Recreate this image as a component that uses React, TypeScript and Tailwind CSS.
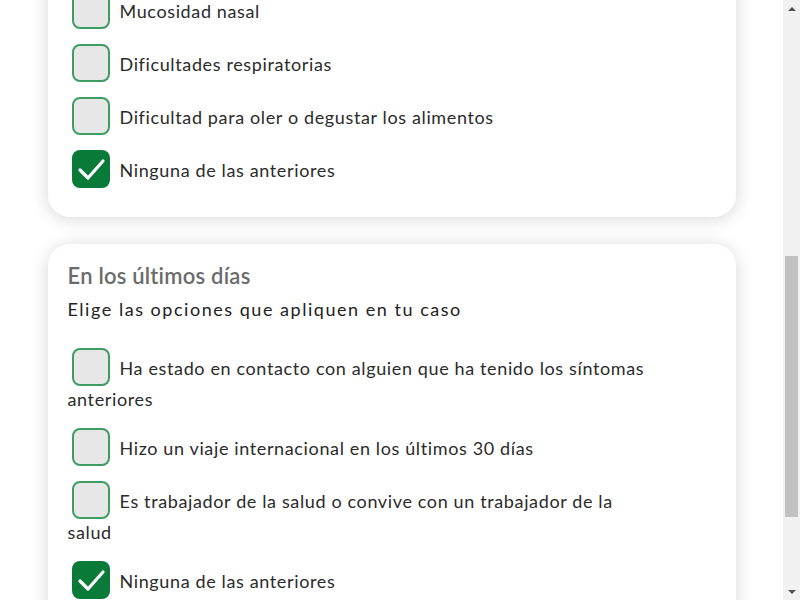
import { useLayoutEffect, useRef } from "react";

type Option = { label: string; checked?: boolean };

const sintomas: Option[] = [
  { label: "Fiebre" },
  { label: "Tos seca" },
  { label: "Dolor de garganta" },
  { label: "Cansancio" },
  { label: "Dolor de cabeza" },
  { label: "Dolor muscular" },
  { label: "Escalofríos" },
  { label: "Diarrea" },
  { label: "Mucosidad nasal" },
  { label: "Dificultades respiratorias" },
  { label: "Dificultad para oler o degustar los alimentos" },
  { label: "Ninguna de las anteriores", checked: true },
];

const ultimosDias: Option[] = [
  {
    label: "Ha estado en contacto con alguien que ha tenido los síntomas anteriores",
  },
  { label: "Hizo un viaje internacional en los últimos 30 días" },
  { label: "Es trabajador de la salud o convive con un trabajador de la salud" },
  { label: "Ninguna de las anteriores", checked: true },
];

function Checkbox({ checked }: { checked?: boolean }) {
  return (
    <span
      className={
        checked
          ? "ml-1 mr-[10px] inline-flex h-[38px] w-[38px] items-center justify-center rounded-[8px] bg-[#0a7a38] align-[-11px]"
          : "ml-1 mr-[10px] inline-block h-[38px] w-[38px] rounded-[8px] border-2 border-[#3f9d64] bg-[#e7e7e7] align-[-11px]"
      }
    >
      {checked && (
        <svg viewBox="0 0 38 38" className="h-[38px] w-[38px]">
          <path
            d="M8 20l8 8L31 11"
            stroke="white"
            strokeWidth="3.2"
            fill="none"
            strokeLinecap="round"
            strokeLinejoin="round"
          />
        </svg>
      )}
    </span>
  );
}

function OptionRow({ option }: { option: Option }) {
  return (
    <label className="block pr-[56px] text-[18px] leading-[27px] tracking-[0.035em] text-[#2b2b2b]">
      <Checkbox checked={option.checked} />
      {option.label}
    </label>
  );
}

function Card({
  title,
  subtitle,
  options,
  cardRef,
}: {
  title: string;
  subtitle: string;
  options: Option[];
  cardRef?: React.Ref<HTMLDivElement>;
}) {
  return (
    <div
      ref={cardRef}
      className="rounded-[22px] bg-white px-5 pt-[18px] pb-[29px] shadow-[0_2px_18px_rgba(0,0,0,0.16)]"
    >
      <h2 className="text-[22px] font-semibold leading-[28px] tracking-[0.01em] text-[#6b6b6b]">
        {title}
      </h2>
      <p className="mt-[6px] text-[18px] leading-[27px] tracking-[0.085em] text-[#222]">
        {subtitle}
      </p>
      <div className="mt-[25px] flex flex-col gap-[15px]">
        {options.map((o) => (
          <OptionRow key={o.label} option={o} />
        ))}
      </div>
    </div>
  );
}

// page scrollbar as it shows in the screenshot
function Scrollbar() {
  return (
    <div className="flex h-screen w-[17px] shrink-0 flex-col bg-[#f1f1f1]">
      <div className="flex h-[17px] items-center justify-center">
        <svg viewBox="0 0 8 4" className="h-[4px] w-[8px]">
          <path d="M0 4L4 0L8 4Z" fill="#505050" />
        </svg>
      </div>
      <div className="flex-1">
        <div className="mx-[2px] mt-[239px] h-[261px] bg-[#c1c1c1]" />
      </div>
      <div className="flex h-[17px] items-center justify-center">
        <svg viewBox="0 0 8 4" className="h-[4px] w-[8px]">
          <path d="M0 0L8 0L4 4Z" fill="#505050" />
        </svg>
      </div>
    </div>
  );
}

export default function App() {
  const scrollRef = useRef<HTMLDivElement>(null);
  const secondRef = useRef<HTMLDivElement>(null);

  useLayoutEffect(() => {
    const box = scrollRef.current;
    const el = secondRef.current;
    if (box && el) {
      box.scrollTop = el.offsetTop - 244;
    }
  }, []);

  return (
    <div className="flex h-screen bg-white font-['Lato','Noto_Sans',sans-serif]">
      <div ref={scrollRef} className="relative h-screen flex-1 overflow-y-auto">
        <div className="mx-auto flex w-[688px] flex-col gap-[27px] pt-3 pb-[33px]">
          <Card
            title="Síntomas"
            subtitle="¿Ha presentado alguno de estos síntomas?"
            options={sintomas}
          />
          <Card
            cardRef={secondRef}
            title="En los últimos días"
            subtitle="Elige las opciones que apliquen en tu caso"
            options={ultimosDias}
          />
          <div className="flex justify-center pt-4">
            <button className="h-[48px] w-[220px] rounded-full bg-[#0a7a38] text-[18px] font-semibold text-white">
              Continuar
            </button>
          </div>
        </div>
      </div>
      <Scrollbar />
    </div>
  );
}
